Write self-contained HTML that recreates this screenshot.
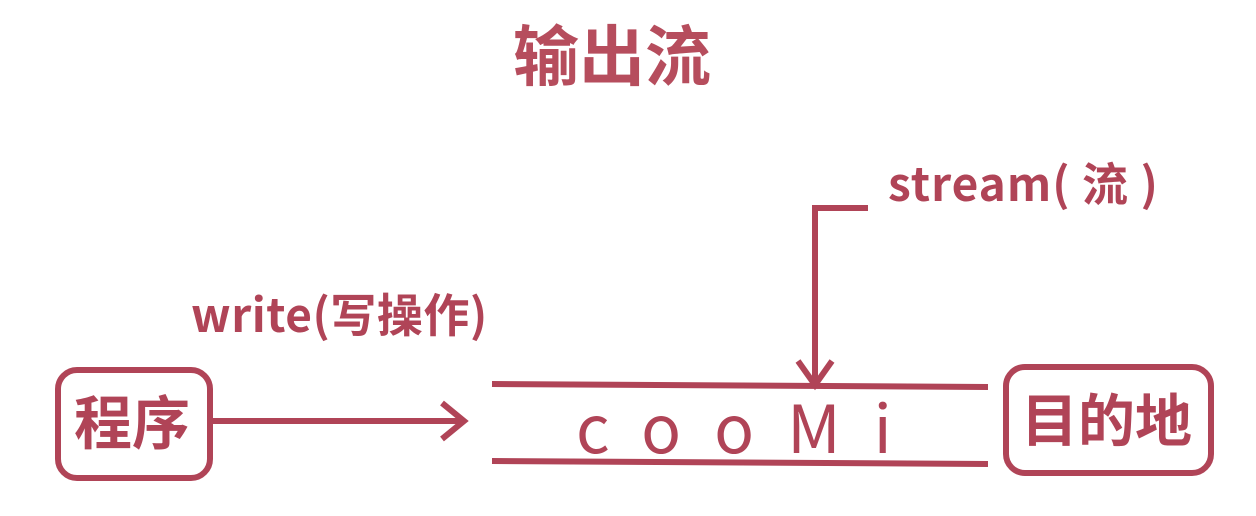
<!DOCTYPE html>
<html><head><meta charset="utf-8"><style>
body{margin:0;width:1256px;height:516px;background:#fff;overflow:hidden;position:relative;font-family:"Liberation Sans","Noto Sans CJK SC",sans-serif;color:#b04457}
.t{position:absolute;white-space:nowrap;line-height:1;font-family:'Noto Sans CJK SC',sans-serif}
.box{position:absolute;border:6px solid #b04457;border-radius:22px;box-sizing:border-box}
</style></head><body>
<div class="t" style="left:513px;top:19px;font-size:66px;font-weight:bold;color:#b64d5d">输出流</div>
<div class="t" style="left:191px;top:290px;font-size:46px;font-weight:bold;letter-spacing:0.5px">write(写操作)</div>
<div class="t" style="left:888px;top:159px;font-size:46px;font-weight:bold;letter-spacing:1px">stream( 流 )</div>
<div class="box" style="left:55px;top:367px;width:158px;height:114px"></div>
<div class="t" style="left:74px;top:390px;font-size:58px;font-weight:bold">程序</div>
<div class="box" style="left:1003px;top:364px;width:211px;height:112px"></div>
<div class="t" style="left:1021px;top:389px;font-size:57px;font-weight:bold">目的地</div>
<div class="t" style="left:576px;top:392px;font-size:66px;letter-spacing:33px">cooMi</div>
<svg width="1256" height="516" style="position:absolute;left:0;top:0" fill="none" stroke="#b04457" stroke-width="6">
<line x1="213" y1="421" x2="462" y2="421"/>
<polyline points="442,403 464,421 442,439" stroke-width="6"/>
<line x1="492" y1="384" x2="988" y2="387"/>
<line x1="492" y1="461" x2="988" y2="464"/>
<polyline points="868,208 815,208 815,383"/>
<polyline points="798,361 815,385 832,361"/>
</svg>
</body></html>
